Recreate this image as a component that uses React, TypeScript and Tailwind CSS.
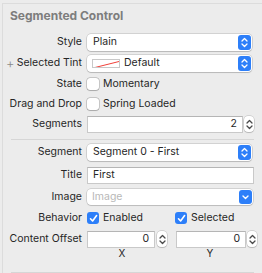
import React from "react";

const font = { fontFamily: "Inter, 'Noto Sans', sans-serif" };

// little up/down chevrons used by popups and steppers
const UpDown = ({ color = "white" }) => (
  <svg width="7" height="11" viewBox="0 0 7 11" fill="none">
    <path d="M1 4 L3.5 1.5 L6 4" stroke={color} strokeWidth="1.3" strokeLinecap="round" strokeLinejoin="round" />
    <path d="M1 7 L3.5 9.5 L6 7" stroke={color} strokeWidth="1.3" strokeLinecap="round" strokeLinejoin="round" />
  </svg>
);

const Down = () => (
  <svg width="7" height="5" viewBox="0 0 7 5" fill="none">
    <path d="M1 1 L3.5 3.5 L6 1" stroke="white" strokeWidth="1.4" strokeLinecap="round" strokeLinejoin="round" />
  </svg>
);

const Label = ({ children }) => (
  <div className="w-[82px] shrink-0 text-right text-[10.5px] text-[#262626] whitespace-nowrap">{children}</div>
);

const Row = ({ label, h = "h-[20px]", children }) => (
  <div className={`flex items-center ${h}`}>
    <Label>{label}</Label>
    <div className="ml-[5px] flex items-center flex-1">{children}</div>
  </div>
);

const Popup = ({ children }) => (
  <div className="w-[165px] h-[17px] bg-white rounded-[4px] shadow-[0_0_0_0.5px_rgba(0,0,0,0.22),0_1px_1px_rgba(0,0,0,0.12)] flex items-center pl-[6px] pr-[1px]">
    <div className="flex-1 flex items-center text-[10.5px] text-[#262626]">{children}</div>
    <div className="w-[13px] h-[15px] rounded-[3px] bg-[#2d7ff9] flex items-center justify-center">
      <UpDown />
    </div>
  </div>
);

const Check = ({ checked = false }) =>
  checked ? (
    <div className="w-[12px] h-[12px] rounded-[3px] bg-[#2d7ff9] flex items-center justify-center">
      <svg width="9" height="9" viewBox="0 0 9 9" fill="none">
        <path d="M1.5 4.8 L3.6 7 L7.6 1.6" stroke="white" strokeWidth="1.6" strokeLinecap="round" strokeLinejoin="round" />
      </svg>
    </div>
  ) : (
    <div className="w-[12px] h-[12px] rounded-[3px] bg-white shadow-[0_0_0_0.5px_rgba(0,0,0,0.3),0_0.5px_1px_rgba(0,0,0,0.15)]" />
  );

const Stepper = () => (
  <div className="w-[10px] h-[16px] rounded-[4px] bg-white shadow-[0_0_0_0.5px_rgba(0,0,0,0.22),0_1px_1px_rgba(0,0,0,0.12)] flex items-center justify-center">
    <UpDown color="#4a4a4a" />
  </div>
);

const Field = ({ w, children, align = "left" }) => (
  <div
    className={`h-[17px] bg-white border border-[#c9c9c9] border-t-[#b5b5b5] flex items-center px-[5px] text-[10.5px] text-[#262626] ${
      align === "right" ? "justify-end" : ""
    } ${w}`}
  >
    {children}
  </div>
);

const Text = ({ children, className = "" }) => (
  <span className={`ml-[4px] text-[10.5px] text-[#262626] ${className}`}>{children}</span>
);

export default function App() {
  return (
    <div className="w-[262px] h-[273px] bg-[#ececec] pt-[3px] pl-[2px] overflow-hidden" style={font}>
      <div className="h-[270px] border-l border-t border-[#dcdcdc]">
        <div className="h-[23px] flex items-center pl-[7px] text-[12px] font-bold text-[#7d7d7d]">
          Segmented Control
        </div>
        <div className="mt-[5px] -ml-[3px]">
          <Row label="Style">
            <Popup>Plain</Popup>
          </Row>
          <div className="mt-[1px]">
            <Row
              label={
                <span className="flex justify-between items-center pl-[6px]">
                  <span className="text-[13px] text-[#8a8a8a] font-light leading-none">+</span>
                  <span>Selected Tint</span>
                </span>
              }
            >
              <Popup>
                <span className="w-[28px] h-[9px] bg-white border border-[#c8c8c8] mr-[4px] -ml-[1px] relative overflow-hidden">
                  <svg width="28" height="9" viewBox="0 0 28 9" className="absolute left-0 top-0">
                    <line x1="0" y1="8" x2="28" y2="1" stroke="#f0403a" strokeWidth="1" />
                  </svg>
                </span>
                Default
              </Popup>
            </Row>
          </div>
          <div className="mt-[1px]">
            <Row label="State">
              <Check />
              <Text>Momentary</Text>
            </Row>
          </div>
          <Row label="Drag and Drop">
            <Check />
            <Text>Spring Loaded</Text>
          </Row>
          <Row label="Segments">
            <Field w="w-[156px]" align="right">
              2
            </Field>
            <div className="ml-[1px]">
              <Stepper />
            </div>
          </Row>
          <div className="mt-[5px] ml-[11px] mr-[8px] h-px bg-[#d6d6d6]" />
          <div className="mt-[2px]">
            <Row label="Segment">
              <Popup>Segment 0 - First</Popup>
            </Row>
          </div>
          <div className="mt-[3px]">
            <Row label="Title">
              <Field w="w-[167px]">First</Field>
            </Row>
          </div>
          <div className="mt-[2px]">
            <Row label="Image">
              <div className="w-[166px] h-[16px] bg-white rounded-[4px] shadow-[0_0_0_0.5px_rgba(0,0,0,0.22),0_1px_1px_rgba(0,0,0,0.1)] flex items-center pl-[5px] pr-[1px]">
                <span className="flex-1 text-[10.5px] text-[#b8b8b8]">Image</span>
                <div className="w-[13px] h-[14px] rounded-[3px] bg-[#2d7ff9] flex items-center justify-center">
                  <Down />
                </div>
              </div>
            </Row>
          </div>
          <div className="mt-[1px]">
            <Row label="Behavior">
              <Check checked />
              <Text className="w-[72px]">Enabled</Text>
              <Check checked />
              <Text>Selected</Text>
            </Row>
          </div>
          <div className="mt-[1px]">
            <Row label="Content Offset">
              <div className="flex items-center">
                <Field w="w-[68px]" align="right">
                  0
                </Field>
                <div className="ml-[2px]">
                  <Stepper />
                </div>
              </div>
              <div className="ml-[9px] flex items-center">
                <Field w="w-[70px]" align="right">
                  0
                </Field>
                <div className="ml-[1px]">
                  <Stepper />
                </div>
              </div>
            </Row>
          </div>
          <div className="flex h-[11px] items-center text-[10px] text-[#262626] -mt-[1px]">
            <div className="w-[118px]" />
            <span className="w-[8px] text-center">X</span>
            <div className="w-[80px]" />
            <span className="w-[8px] text-center">Y</span>
          </div>
          <div className="mt-[13px] ml-[11px] mr-[8px] h-px bg-[#d6d6d6]" />
        </div>
      </div>
    </div>
  );
}
